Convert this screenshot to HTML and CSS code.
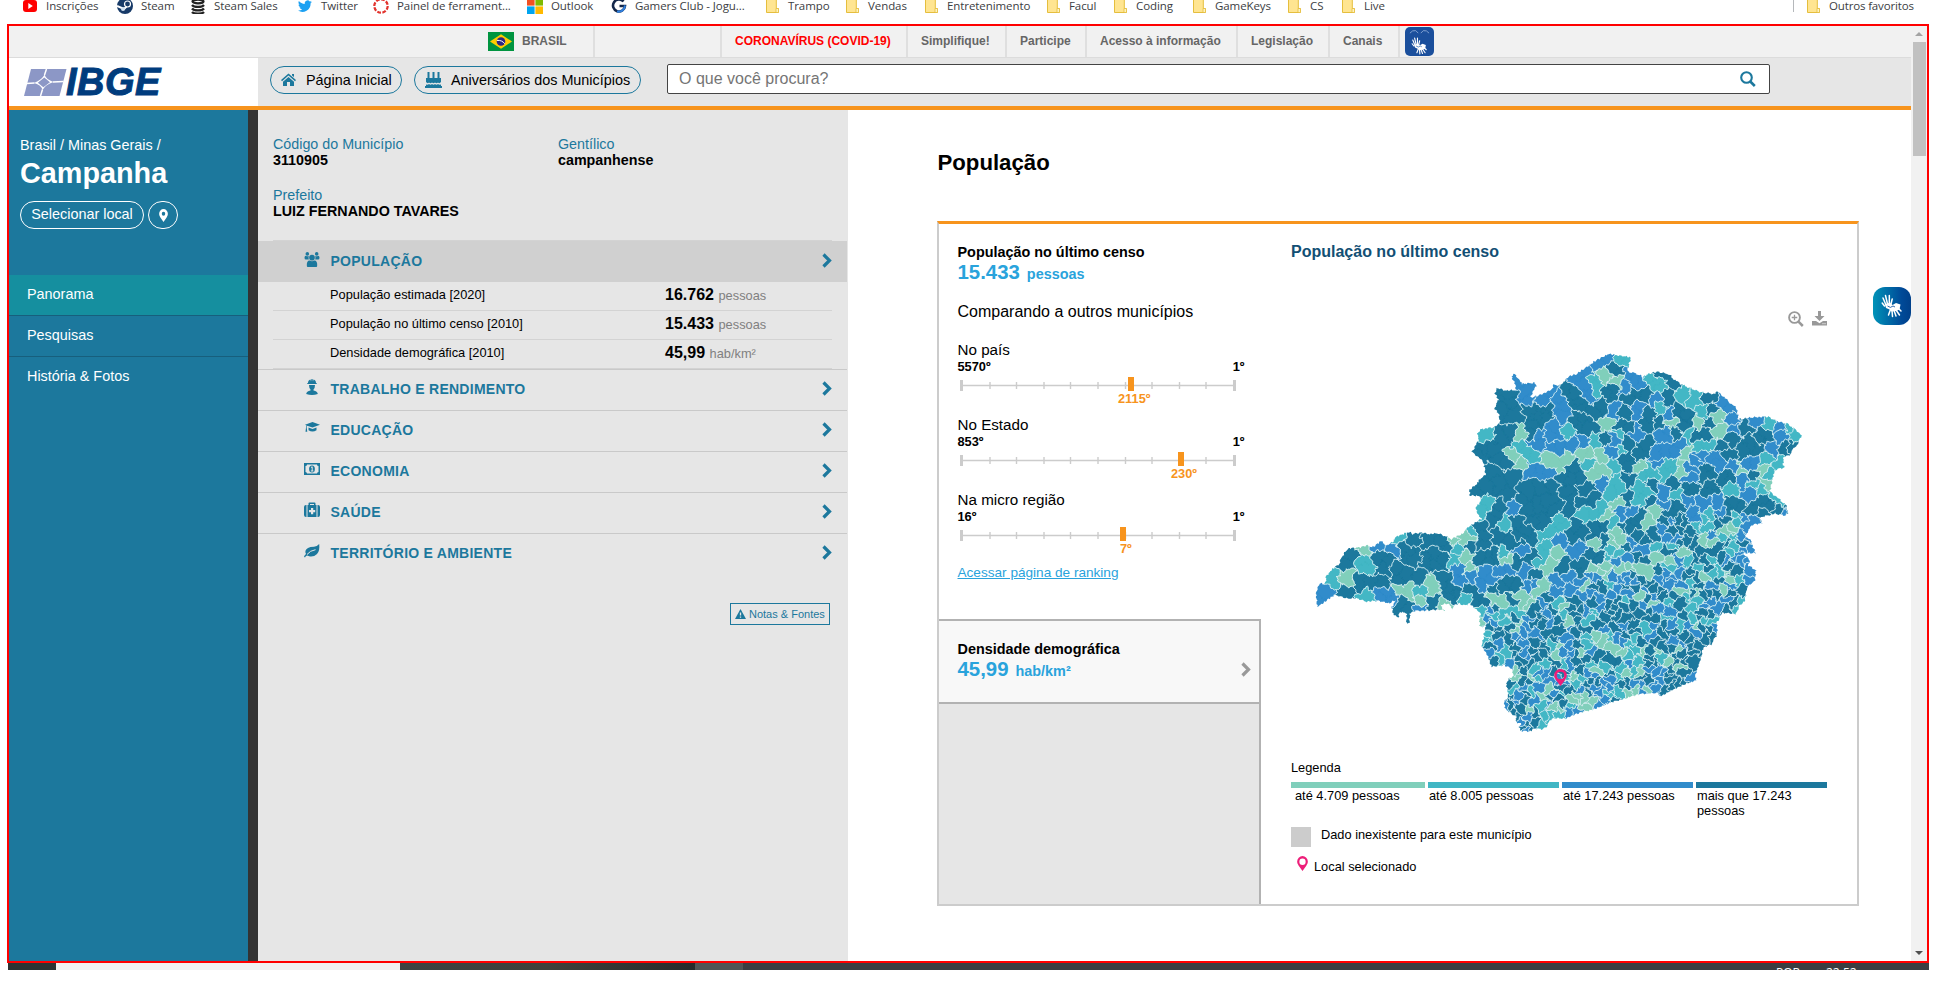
FILE: index.html
```html
<!DOCTYPE html>
<html lang="pt-BR">
<head>
<meta charset="utf-8">
<title>IBGE | Campanha</title>
<link rel="stylesheet" href="styles.css">
</head>
<body>
<svg class="defs" width="0" height="0">
  <defs>
    <symbol id="folder" viewBox="0 0 13 14"><path d="M.5 0h9.800v9.500h2v4H.5z" fill="#ffe591" stroke="#e5be3d"/><path d="M10 9.500h2.500v4H10z" fill="#fff3c0" stroke="#e5be3d" stroke-width=".8"/></symbol>
    <symbol id="chevron" viewBox="0 0 10 15"><path d="M1.500 1.500l6 6-6 6" fill="none" stroke="currentColor" stroke-width="3.200"/></symbol>
    <symbol id="pin" viewBox="0 0 13 17"><path fill-rule="evenodd" d="M6.500 0A6.300 6.300 0 0 0 .2 6.300C.2 8.300 1 9.300 2 11L6.500 17 11 11c1-1.700 1.800-2.700 1.800-4.700A6.300 6.300 0 0 0 6.500 0zm0 2.700a3.700 3.700 0 1 1 0 7.400 3.700 3.700 0 0 1 0-7.400z"/></symbol>
    <symbol id="hands" viewBox="0 0 22 24"><g fill="none" stroke="#fff" stroke-linecap="round" stroke-width="1.500"><path d="M5 11L2 4M6.500 10L4.500 1.500M8.300 9.500V1.500M10 10l1.200-5M3.500 12L1.200 9M17 14l3 3M15 16l3.500 5M13 16.500l2 5.500M11 16.500l.5 6M9.500 15.500L7.500 21"/></g><path d="M4 10.500l5-2 2.500 2.500L15 9l4.500 1.500-1 5-3 1.500-5 .5-2-2L5 14z" fill="#fff"/><path d="M6.500 12q3 2.800 5.500 0l2 1" fill="none" stroke="#1b5aa5" stroke-width=".9"/></symbol>
  </defs>
</svg>

<nav class="bookmarks">
  <a class="bm"><svg class="bm-icon" viewBox="0 0 16 16"><rect x="1" y="2" width="14" height="12" rx="3" fill="#f00"/><path d="M6.300 5v6l4.500-3z" fill="#fff"/></svg>Inscrições</a>
  <a class="bm"><svg class="bm-icon" viewBox="0 0 16 16"><circle cx="8" cy="8" r="8" fill="#173a68"/><path d="M0 8l7 3 5-5" stroke="#fff" stroke-width="2" fill="none"/><circle cx="10.500" cy="6" r="3" fill="#173a68" stroke="#fff" stroke-width="1.200"/><circle cx="6" cy="11" r="2" fill="#cfe0f0"/></svg>Steam</a>
  <a class="bm"><svg class="bm-icon" viewBox="0 0 16 16"><g fill="none" stroke="#222" stroke-width="2.200"><ellipse cx="8" cy="3.500" rx="5.500" ry="1.800"/><path d="M2 7c2 2.600 10 2.600 12 0M2 10.500c2 2.600 10 2.600 12 0M2 14c2 2.200 10 2.200 12 0"/></g></svg>Steam Sales</a>
  <a class="bm"><svg class="bm-icon" viewBox="0 0 16 16"><path fill="#1da1f2" d="M15 3.800c-.5.2-1.100.4-1.700.5.600-.4 1-1 1.300-1.600-.6.300-1.200.6-1.800.7a2.900 2.900 0 0 0-5 2.600C5.400 5.900 3.300 4.700 1.900 3c-.8 1.300-.4 3 .9 3.800-.5 0-.9-.1-1.300-.4 0 1.400 1 2.600 2.300 2.900-.4.100-.9.100-1.300 0 .4 1.200 1.500 2 2.700 2A5.800 5.800 0 0 1 1 12.500 8.200 8.200 0 0 0 13.600 5.200c.5-.4 1-.9 1.400-1.400z"/></svg>Twitter</a>
  <a class="bm"><svg class="bm-icon" viewBox="0 0 16 16"><circle cx="8" cy="8" r="6.700" fill="none" stroke="#e2332d" stroke-width="2.200" stroke-dasharray="3.800 1.450"/></svg>Painel de ferrament...</a>
  <a class="bm"><svg class="bm-icon" viewBox="0 0 16 16"><path fill="#f25022" d="M0 0h7.600v7.600H0z"/><path fill="#7fba00" d="M8.400 0H16v7.600H8.400z"/><path fill="#00a4ef" d="M0 8.400h7.600V16H0z"/><path fill="#ffb900" d="M8.400 8.400H16V16H8.400z"/></svg>Outlook</a>
  <a class="bm"><svg class="bm-icon" viewBox="0 0 16 16"><path d="M12.500 3.500A6 6 0 1 0 14 8H8.500" fill="none" stroke="#14284b" stroke-width="2.600"/><path d="M6 13.500q7 1 8-6" fill="none" stroke="#2f80e0" stroke-width="2"/></svg>Gamers Club - Jogu...</a>
  <a class="bm dir"><svg class="bm-folder"><use href="#folder"/></svg>Trampo</a>
  <a class="bm dir"><svg class="bm-folder"><use href="#folder"/></svg>Vendas</a>
  <a class="bm dir"><svg class="bm-folder"><use href="#folder"/></svg>Entretenimento</a>
  <a class="bm dir"><svg class="bm-folder"><use href="#folder"/></svg>Facul</a>
  <a class="bm dir"><svg class="bm-folder"><use href="#folder"/></svg>Coding</a>
  <a class="bm dir"><svg class="bm-folder"><use href="#folder"/></svg>GameKeys</a>
  <a class="bm dir"><svg class="bm-folder"><use href="#folder"/></svg>CS</a>
  <a class="bm dir"><svg class="bm-folder"><use href="#folder"/></svg>Live</a>
  <a class="bm dir other"><svg class="bm-folder"><use href="#folder"/></svg>Outros favoritos</a>
</nav>

<div class="frame">
  <div class="page">
    <div class="gov">
      <div class="gov-br"><svg width="26" height="19" viewBox="0 0 26 19"><path fill="#009440" d="M0 0h26v19H0z"/><path fill="#ffcb00" d="M13 2.200l11 7.300-11 7.300L2 9.500z"/><circle cx="13" cy="9.500" r="4.300" fill="#302681"/><path d="M9 8.400q5-.4 7.700 3.300" stroke="#fff" fill="none"/></svg>BRASIL</div>
      <div class="gov-gap"></div>
      <a class="gov-a covid">CORONAVÍRUS (COVID-19)</a>
      <a class="gov-a">Simplifique!</a>
      <a class="gov-a">Participe</a>
      <a class="gov-a">Acesso à informação</a>
      <a class="gov-a">Legislação</a>
      <a class="gov-a">Canais</a>
      <div class="gov-libras"><span class="libras-tile"><svg class="libras-brows" viewBox="0 0 25 6"><path d="M1 5q3-4 7-3l3 3M14 5l3-3q4-1 7 3" fill="none" stroke="#7f9fd0" stroke-width="1.200"/></svg><svg width="17" height="18"><use href="#hands"/></svg></span></div>
    </div>

    <header class="top">
      <div class="logo">
        <svg width="43" height="27" viewBox="0 0 43 27"><path fill="#8c97c6" d="M7 0h35.500l-7 27H0z"/><path d="M22.500 0L20.500 6M18.500 20.500l-2 6.500M2.500 14.500l8-.5M29 13l10.500-.5" stroke="#fff" stroke-width="1.500"/><path d="M20.500 5.500q1.500 5 9 7.500-8 2.500-11 8-1-5-8.500-7 8-3 10.500-8.500z" fill="#fff"/><path d="M20.300 8.500l5.700 4.700-6.700 5-5.500-4.500z" fill="#8c97c6"/></svg>
        <span class="logo-text">IBGE</span>
      </div>
      <a class="pill home"><svg width="15" height="14" viewBox="0 0 15 14"><path fill="#1c789d" d="M7.500.5L15 7l-1 1.200L7.500 2.600 1 8.200 0 7zM11 1h2v3l-2-1.600zM7.500 4L13 8.700V13H9V9H6v4H2V8.700z"/></svg>Página Inicial</a>
      <a class="pill bday"><svg width="17" height="16" viewBox="0 0 17 16"><path fill="#1c789d" d="M2.500 0h2v6h-2zM7.500 0h2v6h-2zM12.500 0h2v6h-2zM1 6h15v4q-1.500 2-3 .5-1.500 1.500-3 0-1.500 1.500-3 0-1.500 1.500-3 0-1.500 1.500-3-.5zM1 12.500q2 .5 3-.5 1.500 1.500 3 0 1.500 1.500 3 0 1.500 1.500 3 0 1 1 3 .5V14h1v2H0v-2h1z"/></svg>Aniversários dos Municípios</a>
      <div class="search"><span>O que você procura?</span><svg width="16" height="16" viewBox="0 0 16 16" fill="none" stroke="#1c789d"><circle cx="6.500" cy="6.500" r="5.300" stroke-width="2.100"/><path d="M10.300 10.500l4.500 4.500" stroke-width="2.600"/></svg></div>
    </header>

    <div class="content">
      <aside class="side">
        <div class="crumb">Brasil / Minas Gerais /</div>
        <h1 class="city">Campanha</h1>
        <div class="side-btns"><a class="outline">Selecionar local</a><a class="outline round"><svg width="9" height="13" viewBox="0 0 13 17" fill="#fff" preserveAspectRatio="none"><path fill-rule="evenodd" d="M6.500 0A6.300 6.300 0 0 0 .2 6.300C.2 8.300 1 9.300 2 11L6.500 17 11 11c1-1.700 1.800-2.700 1.800-4.700A6.300 6.300 0 0 0 6.500 0zm0 3.700a2.500 2.500 0 1 1 0 5 2.500 2.500 0 0 1 0-5z"/></svg></a></div>
        <ul class="menu"><li class="on">Panorama</li><li>Pesquisas</li><li>História &amp; Fotos</li></ul>
      </aside>

      <section class="panel">
        <div class="facts">
          <div><p>Código do Município</p><b>3110905</b></div>
          <div><p>Gentílico</p><b>campanhense</b></div>
          <div><p>Prefeito</p><b>LUIZ FERNANDO TAVARES</b></div>
        </div>
        <div class="cats">
          <div class="cat open"><svg class="ci" viewBox="0 0 16 16"><g fill="#1c789d"><circle cx="8" cy="6" r="3"/><circle cx="3" cy="2" r="1.900"/><circle cx="13" cy="2" r="1.900"/><path d="M2.500 15q-.5-6 3-6 2.500 1.500 5 0 3.500 0 3 6 0 1-1 1h-9q-1 0-1-1zM0 6q0-2 1.500-2Q3 5 4.600 4.200 4 6 4.600 8H1.500Q0 8 0 6zM16 6q0-2-1.500-2-1.500 1-3.100.2.600 1.800 0 3.800h3.100Q16 8 16 6z"/></g></svg><span>POPULAÇÃO</span><svg class="chev"><use href="#chevron"/></svg></div>
          <dl class="stats">
            <div><dt>População estimada [2020]</dt><dd><b>16.762</b> pessoas</dd></div>
            <div><dt>População no último censo [2010]</dt><dd><b>15.433</b> pessoas</dd></div>
            <div><dt>Densidade demográfica [2010]</dt><dd><b>45,99</b> hab/km²</dd></div>
          </dl>
          <div class="cat"><svg class="ci" viewBox="0 0 16 16"><path fill="#1c789d" d="M4 4q0-3 2.500-3.500l.5 2L7.500 0h1l.5 2.500.5-2Q12 1 12 4h.7v1H3.300V4zM5 6h6q0 3-1.500 4.500v1Q13.500 12 13.800 15q-5.800 2-11.600 0Q2.500 12 6.500 11.500v-1Q5 9 5 6z"/></svg><span>TRABALHO E RENDIMENTO</span><svg class="chev"><use href="#chevron"/></svg></div>
          <div class="cat"><svg class="ci" viewBox="0 0 16 16"><path fill="#1c789d" d="M1 4.800L8.500 2 16 4.800 8.500 7.600 3.200 5.800q-.6.800-.5 2l.6 4H1.500l.5-4q.1-1.500.6-2.400zM4.500 7.500l4 1.400 4-1.400v2.800q-4 2.400-8 0z"/></svg><span>EDUCAÇÃO</span><svg class="chev"><use href="#chevron"/></svg></div>
          <div class="cat"><svg class="ci" viewBox="0 0 16 16"><path fill="#1c789d" fill-rule="evenodd" d="M0 2h16v12H0zm3 1.500Q3 5 1.500 5v6Q3 11 3 12.500h10q0-1.500 1.500-1.500V5Q13 5 13 3.500z"/><ellipse cx="8" cy="8" rx="2.900" ry="3.500" fill="#1c789d"/><path d="M7 6.500l1.200-.7v4.200M6.800 10h2.600" stroke="#e6e6e6" fill="none"/></svg><span>ECONOMIA</span><svg class="chev"><use href="#chevron"/></svg></div>
          <div class="cat"><svg class="ci" viewBox="0 0 16 16"><path fill="#1c789d" fill-rule="evenodd" d="M4.500 3V1.500Q4.500.5 5.500.5h5q1 0 1 1V3h1v12h-9V3zM6 3h4V2H6zm1 3v2H5v2.200h2v2h2.200v-2h2V8h-2V6zM0 5q0-2 2-2h.5v12H2q-2 0-2-2zM16 5q0-2-2-2h-.5v12h.5q2 0 2-2z"/></svg><span>SAÚDE</span><svg class="chev"><use href="#chevron"/></svg></div>
          <div class="cat"><svg class="ci" viewBox="0 0 16 16"><path fill="#1c789d" d="M15.200 1Q16 8 13 11q-3 3-7 2.500-1.500-.3-3-1Q1.500 13 1 14.500l-1-.7Q.5 12 2 11 0 7.500 4 5q2-1.200 6-1.300Q13 3.500 15.200 1z"/><path d="M3 11.500Q6 7.500 11.500 6.700" fill="none" stroke="#e6e6e6"/></svg><span>TERRITÓRIO E AMBIENTE</span><svg class="chev"><use href="#chevron"/></svg></div>
        </div>
        <a class="notes"><svg width="11" height="10" viewBox="0 0 11 10"><path fill="#1c789d" d="M5.500 0L11 10H0z"/><path d="M5.500 3.400v3.200M5.500 7.600v1.200" stroke="#e6e6e6" stroke-width="1.300"/></svg>Notas &amp; Fontes</a>
      </section>

      <main class="main">
        <h2>População</h2>
        <div class="card">
          <div class="left">
            <div class="sel">
              <h3>População no último censo</h3>
              <p class="big"><b>15.433</b> pessoas</p>
              <p class="cmp">Comparando a outros municípios</p>
              <div class="rank"><p>No país</p><div class="ends"><b>5570º</b><b>1º</b></div><svg class="scale" viewBox="0 0 278 15"><path class="axis" d="M2 8.500h275"/><path class="tick" d="M32 5v7M58.500 5v7M86 5v7M112.500 5v7M140 5v7M167.500 5v7M194 5v7M221.500 5v7M248 5v7"/><path class="cap" d="M3.500 3v11M276.500 3v11"/><path class="mark" d="M170 0h6v14h-6z"/></svg><em class="r1">2115º</em></div>
              <div class="rank"><p>No Estado</p><div class="ends"><b>853º</b><b>1º</b></div><svg class="scale" viewBox="0 0 278 15"><path class="axis" d="M2 8.500h275"/><path class="tick" d="M32 5v7M58.500 5v7M86 5v7M112.500 5v7M140 5v7M167.500 5v7M194 5v7M221.500 5v7M248 5v7"/><path class="cap" d="M3.500 3v11M276.500 3v11"/><path class="mark" d="M220 0h6v14h-6z"/></svg><em class="r2">230º</em></div>
              <div class="rank"><p>Na micro região</p><div class="ends"><b>16º</b><b>1º</b></div><svg class="scale" viewBox="0 0 278 15"><path class="axis" d="M2 8.500h275"/><path class="tick" d="M32 5v7M58.500 5v7M86 5v7M112.500 5v7M140 5v7M167.500 5v7M194 5v7M221.500 5v7M248 5v7"/><path class="cap" d="M3.500 3v11M276.500 3v11"/><path class="mark" d="M162 0h6v14h-6z"/></svg><em class="r3">7º</em></div>
              <a class="rlink">Acessar página de ranking</a>
            </div>
            <div class="dens"><div><h3>Densidade demográfica</h3><p class="big"><b>45,99</b> hab/km²</p></div><svg class="chev grey"><use href="#chevron"/></svg></div>
            <div class="rest"></div>
          </div>
          <div class="right">
            <h4>População no último censo</h4>
            <div class="tools">
              <svg width="16" height="16" viewBox="0 0 16 16" fill="none" stroke="#999"><circle cx="6.500" cy="6.500" r="5.400" stroke-width="1.900"/><path d="M10.500 10.700l4.300 4.300" stroke-width="2.500"/><path d="M6.500 3.700v5.600M3.700 6.500h5.600" stroke-width="1.300"/></svg>
              <svg width="15" height="15" viewBox="0 0 15 15"><path fill="#999" d="M6 0h3v5h3.500l-5 5-5-5H6zM0 10h4l3.500 2.300L11 10h4v4.500H0z"/><path d="M10.500 12.700h1M12.500 12.700h1" stroke="#fff"/></svg>
            </div>
            <div class="map"><svg id="mg" width="560" height="410" viewBox="0 0 1680 1230"></svg><svg class="map-pin"><use href="#pin"/></svg></div>
            <p class="leg-t">Legenda</p>
            <div class="legend"><span class="c1">até 4.709 pessoas</span><span class="c2">até 8.005 pessoas</span><span class="c3">até 17.243 pessoas</span><span class="c4">mais que 17.243 pessoas</span></div>
            <p class="nodata"><i></i>Dado inexistente para este município</p>
            <p class="local"><svg width="11" height="15" viewBox="0 0 13 17" preserveAspectRatio="none" fill="#ed1e79"><use href="#pin"/></svg>Local selecionado</p>
          </div>
        </div>
        <div class="widget"><svg width="22" height="24"><use href="#hands"/></svg></div>
      </main>
    </div>
  </div>
  <div class="scroll"><i class="up"></i><i class="thumb"></i><i class="down"></i></div>
</div>
<div class="taskbar"><i class="t1"></i><i class="t2"></i><i class="t3"></i><i class="t4"></i><span class="t5">POR</span><span>22:52</span></div>
<script src="map.js"></script>
</body>
</html>
```
FILE: styles.css
```css
* { box-sizing: border-box; margin: 0; padding: 0; }
html, body { height: 100%; overflow: hidden; }
body { background: #fff; font-family: "Liberation Sans", Arial, sans-serif; font-size: 14.4px; color: #000; }
svg { display: block; flex: none; }
.defs { position: absolute; }
ul { list-style: none; }

.bookmarks { display: grid; grid-template-columns: 95px 73px 107px 76px 154px 84px 155px 80px 79px 122px 67px 79px 95px 54px 1fr 136px; height: 24px; padding-left: 22px; padding-right: 7px; font: 11.5px/12px "Open Sans", sans-serif; color: #3c4043; }
.bm { display: flex; align-items: center; gap: 8px; height: 12px; white-space: nowrap; letter-spacing: -.08px; }
.bm-icon { width: 16px; height: 16px; margin-top: -1px; }
.bm-folder { width: 13px; height: 14px; }
.bm.dir { gap: 9px; }
.bm.other { border-left: 1px solid #b5b8bb; padding-left: 13px; letter-spacing: -.15px; }

.frame { display: flex; width: 1922px; height: 939px; margin-left: 7px; border: 2px solid #f00; }
.page { width: 1902px; display: flex; flex-direction: column; position: relative; }

.gov { display: grid; grid-template-columns: 584px 127px 186px 99px 80px 151px 92px 70px 1fr; height: 32px; background: #f1f1f1; border-bottom: 1px solid #dcdcdc; font-size: 12px; font-weight: bold; line-height: 30px; color: #666; }
.gov > * + * { border-left: 2px solid #dfdfdf; }
.gov-br { display: flex; align-items: center; gap: 8px; padding: 0 0 1px 479px; }
.gov-a { padding-left: 13px; white-space: nowrap; }
.gov-a.covid { color: #f00; }
.gov-libras { padding: 1px 0 0 5px; }
.libras-tile { display: flex; flex-direction: column; align-items: center; gap: 3px; width: 29px; height: 29px; border-radius: 5px; background: #1b4f9c; padding-top: 2px; }
.libras-brows { width: 25px; height: 5px; }

.top { display: flex; height: 52px; background: #e6e6e6; border-bottom: 4px solid #f7941d; }
.logo { display: flex; width: 249px; background: #fff; padding: 11px 0 0 15px; }
.logo-text { margin-left: -1px; font: italic bold 38px/27px "Liberation Sans", Arial, sans-serif; letter-spacing: .5px; color: #003c7d; -webkit-text-stroke: 1px #003c7d; }
.pill { display: flex; align-items: center; height: 28px; margin-top: 8px; border: 1px solid #1c789d; border-radius: 14px; white-space: nowrap; }
.home { width: 132px; margin-left: 12px; padding-left: 10px; gap: 10px; }
.bday { width: 227px; margin-left: 12px; padding-left: 10px; gap: 9px; }
.search { display: flex; justify-content: space-between; width: 1103px; height: 30px; margin: 6px 0 0 26px; padding: 6px 13px 0 11px; border: 1px solid #444; border-radius: 2px; background: #fff; font-size: 16px; line-height: 16px; color: #757575; }

.content { display: flex; height: 851px; }
.side { width: 249px; background: #1c789d; border-right: 10px solid #333; color: #fff; padding-top: 27px; }
.crumb { padding-left: 11px; line-height: 16px; }
.city { padding-left: 11px; font-size: 28.800px; line-height: 34px; margin-top: 3px; }
.side-btns { display: flex; gap: 4px; padding: 11px 0 0 11px; }
.outline { height: 28px; width: 124px; border: 1px solid #fff; border-radius: 14px; line-height: 25px; text-align: center; font-size: 14.400px; }
.round { width: 30px; display: flex; align-items: center; justify-content: center; }
.menu { margin-top: 46px; }
.menu li { height: 41px; padding-left: 18px; line-height: 39px; border-bottom: 1px solid #175f7d; }
.menu li:last-child { border: 0; }
.menu .on { background: #158f9f; }

.panel { width: 590px; background: #e6e6e6; padding-right: 1px; }
.facts { display: grid; grid-template-columns: 285px 1fr; row-gap: 19px; padding: 27px 0 0 15px; height: 130px; grid-template-rows: 32px 32px; line-height: 16px; font-size: 14.300px; }
.facts p { color: #1c789d; line-height: 15px; }
.facts b { display: block; line-height: 16px; }
.cats { background: linear-gradient(#d3d3d3, #d3d3d3) 15px 0 / 559px 1px no-repeat; padding-top: 1px; }
.cat { display: flex; height: 41px; border-top: 1px solid #c9c9c9; padding-left: 46px; color: #1c789d; font-weight: bold; font-size: 14px; letter-spacing: .26px; line-height: 39px; }
.cat.open { background: #d0d0d0; border-color: #d0d0d0; }
.cat span { flex: 1; padding-left: 10.500px; }
.ci { width: 16px; height: 16px; margin-top: 9px; }
.open .ci { height: 15px; margin-top: 10px; }
.chev { width: 10px; height: 15px; margin: 11px 15px 0 0; color: #1c789d; }
.stats { padding: 0 15px; font-size: 12.800px; }
.stats div { display: flex; height: 29px; border-bottom: 1px solid #d3d3d3; padding-left: 57px; line-height: 26px; }
.stats dt { width: 335px; }
.stats dd { color: #808080; }
.stats b { color: #000; font-size: 16px; margin-right: 1px; }
.notes { display: flex; align-items: center; gap: 3px; width: 100px; height: 22px; margin: 29px 0 0 472px; padding-left: 4px; border: 1px solid #1c789d; color: #1c789d; font-size: 11px; white-space: nowrap; }

.main { flex: 1; padding: 40px 0 0 89.500px; position: relative; }
.main h2 { font-size: 22.200px; line-height: 26px; height: 71px; }
.card { display: flex; width: 922px; height: 685px; margin-left: -.5px; border: 2px solid #ccc; border-top: 3px solid #f7941d; }
.left { width: 322px; display: flex; flex-direction: column; }
.sel { height: 395px; padding: 20px 0 0 18.500px; }
h3 { font-size: 14.400px; line-height: 16px; }
.big { color: #29a3dc; font-weight: bold; line-height: 22px; margin-top: 1px; }
.big b { font-size: 20.400px; margin-right: 3px; }
.cmp { font-size: 16px; line-height: 18px; margin-top: 18px; }
.rank { position: relative; width: 287px; height: 75px; }
.cmp + .rank { margin-top: 20px; }
.rank p { font-size: 15.200px; line-height: 18px; }
.ends { display: flex; justify-content: space-between; font-size: 12.800px; line-height: 16px; }
.scale { width: 278px; height: 15px; margin-left: .5px; margin-top: 2px; }
.axis { stroke: #ccc; stroke-width: 1.600; }
.tick { stroke: #ccc; stroke-width: 1.400; }
.cap { stroke: #ccc; stroke-width: 3; }
.mark { fill: #f7941d; }
.rank em { display: block; width: 34px; font-style: normal; font-weight: bold; font-size: 12.800px; line-height: 14px; color: #f7941d; }
.r1 { margin-left: 160.500px; }
.r2 { margin-left: 213.500px; }
.r3 { margin-left: 162.500px; }
.rlink { display: block; font-size: 13.600px; line-height: 16px; margin-top: -1px; color: #29a3dc; text-decoration: underline; }
.dens { display: flex; justify-content: space-between; height: 85px; border: 2px solid #b2b2b2; border-left: 0; background: #f8f8f8; padding: 20px 0 0 18.500px; }
.dens .chev { color: #999; margin: 21px 8px 0 0; }
.rest { flex: 1; background: #e6e6e6; border-right: 2px solid #b2b2b2; }
.right { flex: 1; padding: 20px 0 0 30px; }
.right h4 { font-size: 16px; line-height: 16px; color: #124f74; }
.tools { display: flex; gap: 8px; justify-content: flex-end; margin: 51px 30px 0 0; height: 16px; }
.map { position: relative; height: 410px; margin: 13px -2px 0 -11px; width: 560px; }
.map-pin { position: absolute; left: 274px; top: 329px; width: 13px; height: 17px; fill: #ed1e79; }
.leg-t { font-size: 12.800px; line-height: 15px; margin-top: 10px; }
.legend { display: grid; grid-template-columns: 134px 131px 131px 131px; gap: 3px; margin-top: 7px; height: 45px; font-size: 12.800px; line-height: 15px; }
.legend span { border-top: 6px solid; padding-left: 1px; }
.legend .c1 { border-image: linear-gradient(#80cfbb, #80cfbb) 1; padding-left: 4px; }
.legend .c2 { border-image: linear-gradient(#41b6c4, #41b6c4) 1; }
.legend .c3 { border-image: linear-gradient(#318ccb, #318ccb) 1; }
.legend .c4 { border-image: linear-gradient(#1c789d, #1c789d) 1; }
.nodata { display: flex; gap: 10px; font-size: 12.800px; height: 29px; line-height: 16px; }
.nodata i { width: 20px; height: 20px; background: #ccc; }
.local { display: flex; gap: 6px; padding-left: 6px; font-size: 12.800px; line-height: 21px; }
.widget { position: absolute; right: 0; top: 177px; width: 38px; height: 38px; border-radius: 12px; background: linear-gradient(90deg, #0093b8, #004a98 75%, #00408a); display: flex; align-items: center; justify-content: center; }

.scroll { width: 16px; background: #f1f1f1; display: flex; flex-direction: column; align-items: center; }
.up { border: 4px solid transparent; border-top: 0; border-bottom: 4px solid #a3a3a3; margin-top: 6px; }
.thumb { width: 13px; height: 114px; background: #c1c1c1; margin-top: 6px; }
.down { border: 4px solid transparent; border-bottom: 0; border-top: 4px solid #505050; margin: auto 0 6px; }

.taskbar { display: flex; width: 1921px; height: 7px; margin-left: 8px; background: #3a3e42; overflow: hidden; font: 12px/15px "Open Sans", sans-serif; color: #fff; }
.taskbar span { width: 50px; padding-top: 2px; }
.taskbar .t5 { margin-left: 1033px; }
.t1 { width: 48px; background: #2d3333; }
.t2 { width: 344px; background: #f1f1f1; }
.t3 { width: 295px; background: linear-gradient(90deg, #3c4342, #3f413b 50%, #262b2b); }
.t4 { width: 48px; background: #505555; }
```
FILE: map.js
```js
// Choropleth of Minas Gerais: municipalities are Voronoi cells inside the state outline.
(function () {
  var FILL = { d: '#1c789d', b: '#318ccb', t: '#43b7c5', g: '#80cfbb' };
  var OUTLINE = '112,800 108,765 112,745 122,728 135,735 140,705 155,690 178,672 182,655 205,625 240,622 262,615 275,622 305,602 318,618 340,602 350,590 370,583 385,576 400,582 420,578 450,582 475,580 505,592 512,598 530,588 545,582 560,566 580,552 605,535 592,520 588,500 605,480 598,468 570,467 568,452 590,430 617,402 610,365 576,335 590,310 597,297 592,285 600,268 640,262 660,250 657,225 643,205 656,180 645,160 650,143 680,152 708,150 705,130 694,110 702,103 722,122 725,132 750,130 765,128 768,140 755,160 752,174 790,160 815,148 822,135 838,136 855,122 870,108 890,103 905,92 925,78 940,65 965,52 985,42 1015,46 1052,52 1045,80 1042,95 1065,100 1090,112 1105,103 1130,95 1165,103 1195,128 1220,140 1258,155 1300,163 1315,155 1340,180 1370,205 1375,238 1420,232 1465,230 1490,243 1525,252 1565,285 1550,318 1535,332 1530,345 1513,350 1508,370 1514,384 1492,386 1483,395 1475,430 1470,455 1495,475 1518,495 1523,517 1518,528 1485,520 1450,530 1440,535 1447,550 1420,553 1405,570 1395,592 1412,597 1415,612 1428,640 1400,638 1388,642 1410,660 1405,677 1428,690 1425,720 1400,745 1395,780 1380,795 1368,822 1325,818 1310,850 1312,880 1295,912 1270,922 1260,962 1250,992 1246,1010 1250,1022 1220,1030 1170,1052 1142,1068 1135,1058 1080,1062 1000,1085 950,1105 900,1118 860,1135 815,1135 800,1158 785,1168 765,1165 750,1175 720,1172 718,1160 722,1150 705,1145 712,1130 695,1122 675,1105 673,1085 685,1070 682,1045 678,1030 690,1015 700,1010 697,988 675,975 635,980 622,945 605,915 612,885 615,870 620,860 600,858 598,830 605,825 585,805 570,788 555,797 540,790 520,795 518,810 505,790 480,795 495,812 475,808 440,812 410,812 390,820 388,850 380,850 380,820 360,815 355,832 340,825 335,800 348,780 330,790 290,782 260,785 230,775 200,775 165,765 140,780';
  var WEST = 'b 135,765 125,785|t 155,715|g 198,717|d 200,665 215,640|g 252,625|t 255,660 262,685|d 200,755|d 240,725 270,725 305,725|t 262,768|b 318,765 340,775 300,770|b 292,622|d 300,650 320,660 310,685|b 345,628|t 355,597|d 385,640 405,655 365,625|d 400,595|d 350,690 380,705 415,715 360,720|d 450,600 480,610 505,620|d 440,660 470,670 490,660 460,640|g 365,750 385,757|t 420,755|g 460,740|d 490,720 515,740 530,760 510,770|d 365,790 385,800|g 420,785|b 420,803|d 458,790|g 492,795|t 553,775|g 520,607|t 538,625|g 550,590 565,598|t 575,575|d 570,620|t 522,658|g 560,652|d 600,560 615,590 610,610|b 540,690 540,720|g 567,685|b 570,710|b 610,700 600,735 640,715|d 625,655 600,650 650,645|t 665,640|g 675,660|d 640,745|d 690,725 670,735 710,740|d 590,770 610,790 575,745|g 640,780 665,787|g 715,765 730,790|t 690,815 665,820 720,825|t 640,830 680,845|b 680,685 660,695|b 730,690|b 740,740|d 765,705|g 790,730 775,755|d 805,770|b 825,725|b 868,715|d 905,680 905,700|t 790,640 780,665 800,610|g 825,640|g 820,665 800,690|d 840,680|b 840,600|b 905,622 885,628|g 945,610|d 960,650 930,640|d 690,600 655,585 720,612|b 725,630|d 740,660 765,645 710,668|d 740,570 720,590 710,550 755,590|t 670,550|b 700,500|d 650,520 640,545 660,500|t 620,495 605,515|d 620,440 660,435 700,405 640,390 590,455 680,460|d 640,330 690,280 610,330 600,345 650,360 680,370 665,290|t 618,280|d 685,185 665,215 700,225 690,160|b 735,160 715,130 745,180|b 790,180 815,165|d 770,225 750,205 795,220 755,280 800,210 760,260|g 725,280|t 735,335 760,345 715,320|g 705,340|g 725,370|b 770,310 780,290|g 800,360 830,370 860,355|b 780,395 755,385 805,400|b 840,320 870,315 815,320|b 825,265 810,285 835,290|b 840,200 850,230 830,175|t 862,275|d 900,250 885,240 930,265 915,230|d 880,160 860,145 905,200 940,210 965,200 895,180|b 910,130 920,160 930,180 885,115 925,100|b 960,70 985,60|t 940,110 950,150|g 972,105|b 915,310|t 945,300|g 905,345 930,340|g 958,345|t 925,378|g 940,400 970,390|b 965,430|d 780,440 740,450 820,440 720,480 770,500 810,480 830,500 790,550 750,510 760,540|d 880,380 870,420 900,410 850,420 870,470 865,510 860,450|d 915,450|d 935,480 910,485|t 840,540 810,570 785,590 850,550|d 890,560 880,590 910,580|d 950,570 940,590 965,560|g 600,845|b 620,845|t 625,880|d 645,870|d 680,885 690,905|t 615,900|d 630,920|b 628,938|d 640,960|d 765,800 750,815|b 800,815|b 770,880|d 830,870 850,865 805,880|b 850,895 870,890|g 720,850|d 760,850|d 795,920|b 735,940|d 770,960|d 690,1030|d 690,1090|d 830,970|b 740,1040|d 755,1162|t 788,1158|d 727,1165';
  var EAST = 't 235,55 255,58|d 235,95 225,80|b 280,120 270,105 300,125|d 200,155 215,150|d 290,165 270,175 320,165|t 340,130 360,140 330,120|d 370,105 400,120 350,100|d 385,170|t 430,170|t 460,180|d 510,175|b 550,185 570,205|t 490,215|d 440,225 430,250 450,240 415,215|t 360,200|b 300,210 290,215|d 255,220|d 325,220 320,260|g 395,250|b 380,275 370,290|d 500,245|g 538,230|g 540,275|b 570,235|b 580,265|d 620,260|d 680,285 660,300|b 650,240|t 690,245|b 725,290|t 765,290|b 700,330|b 720,255|d 570,300|d 630,310 610,330 650,320|d 570,345|d 490,285 470,290|t 440,290|t 480,320 500,318|b 420,315 380,330 350,345 400,340|d 310,310 300,340|b 290,280|d 260,310 260,350 265,380|t 235,280|d 260,260 240,260|d 195,300|b 225,300|b 215,215|g 435,340|b 480,345|b 525,350 535,370|b 580,380|t 390,370 370,400 400,385|t 330,390 310,405 345,400|g 300,385|g 422,387|d 510,390 500,400|b 450,385|b 450,415|d 550,415 570,410|g 603,385|b 640,370 620,380|t 680,355|g 670,390|d 640,407|t 640,432|g 682,430|t 690,400|t 720,375|b 607,425|d 450,450 440,440|d 400,430|d 330,435|d 510,450 515,440|t 575,450|b 630,460|d 585,490 570,510 600,500|d 660,480 630,510 685,500|d 715,510|b 370,465|t 410,465|d 395,510 385,520 410,500|b 530,490|b 495,490|b 465,540 460,520|d 535,545|t 510,530|b 640,550 620,560|t 595,550|g 565,575 550,570|t 300,450 290,480 320,455|g 345,510|d 265,480|b 240,520|g 230,490|t 210,460 230,430|t 130,520 160,520 185,505|t 220,547|g 240,600 230,580|g 320,540|d 290,550 300,530 270,565|b 370,565|b 270,600|t 205,630|d 180,650 195,610|b 260,650|d 315,660|b 225,670|d 320,600|g 350,650|d 520,635 540,625 490,635|t 570,640|d 390,635|b 385,595|d 440,600|d 590,690 575,700|b 625,690|t 595,715|d 610,750 620,740|d 580,790|d 560,810|b 570,740|g 310,695 335,705 290,685|b 285,725|d 340,745|b 380,705 390,730|g 425,755|d 250,830 270,830|d 330,835 350,832|d 215,955 200,960 230,965|d 320,1020|d 450,935|d 430,1000|d 400,1035 430,1030|b 210,1020|g 165,990|g 260,1005|d 145,1055|d 750,510';

  function pts(s) { return s.split(' ').map(function (p) { return p.split(',').map(Number); }); }
  var state = pts(OUTLINE), sites = [], groups = 0;
  function load(src, dx) {
    src.split('|').forEach(function (g) {
      var id = groups++;
      pts(g.slice(2)).forEach(function (p) { sites.push({ x: p[0] + dx, y: p[1], c: g[0], g: id }); });
    });
  }
  load(WEST, 0);
  load(EAST, 780);

  var seed = 20107;
  function rnd() { seed = (seed * 16807) % 2147483647; return seed / 2147483647; }
  function inside(x, y) {
    for (var i = 0, j = state.length - 1, r = false; i < state.length; j = i++) {
      var a = state[i], b = state[j];
      if ((a[1] > y) !== (b[1] > y) && x < (b[0] - a[0]) * (y - a[1]) / (b[1] - a[1]) + a[0]) r = !r;
    }
    return r;
  }
  // Municipalities get smaller toward the south and the east.
  function spacing(x, y) {
    if (x < 600) return 60;
    if (y > 1000) return 15;
    if (y > 900) return 18;
    if (y > 780) return 18;
    if (x > 900 && y > 680) return 18;
    if (x > 1150 && y > 520) return 19;
    if (x > 950 && y > 560) return 25;
    if (x > 950) return 31;
    return y > 700 ? 28 : 46;
  }
  for (var n = 0; n < 7000; n++) {
    var x = 560 + rnd() * 1010, y = 40 + rnd() * 1140, r = spacing(x, y) * (.75 + .7 * rnd());
    if (!inside(x, y)) continue;
    var ok = true;
    for (var k = 0; k < sites.length && ok; k++) {
      var ex = sites[k].x - x, ey = sites[k].y - y;
      if (ex * ex + ey * ey < r * r) ok = false;
    }
    if (!ok) continue;
    var q = rnd();
    sites.push({ x: x, y: y, c: q < .35 ? 'd' : q < .65 ? 'b' : q < .85 ? 't' : 'g', g: groups++ });
  }

  // Position-based offset gives shared borders the same irregular shape.
  function warp(x, y) {
    return [
      x + 5.5 * Math.sin(y * .13 + 2 * Math.sin(x * .07)) + 3 * Math.sin(y * .37 + x * .21) + 1.3 * Math.sin(y * .9 - x * .5),
      y + 5.5 * Math.sin(x * .12 + 2 * Math.sin(y * .08)) + 3 * Math.sin(x * .35 - y * .24) + 1.3 * Math.sin(x * .8 + y * .6)
    ];
  }
  function fine(x, y) {
    return [x + 1.8 * Math.sin(y * .4 + x * .2) + 1.2 * Math.sin(y * .95), y + 1.8 * Math.sin(x * .42 - y * .2) + 1.2 * Math.sin(x * .9)];
  }
  function line(a, b, f) {
    var m = Math.max(1, Math.ceil(Math.hypot(b[0] - a[0], b[1] - a[1]) / 3)), s = '';
    for (var i = 1; i <= m; i++) {
      var p = f(a[0] + (b[0] - a[0]) * i / m, a[1] + (b[1] - a[1]) * i / m);
      s += 'L' + p[0].toFixed(1) + ' ' + p[1].toFixed(1);
    }
    return s;
  }
  function start(a, f) { var p = f(a[0], a[1]); return 'M' + p[0].toFixed(1) + ' ' + p[1].toFixed(1); }

  var fills = { d: '', b: '', t: '', g: '' }, borders = '';
  sites.forEach(function (s, i) {
    var poly = [[60, 0, -1], [1640, 0, -1], [1640, 1220, -1], [60, 1220, -1]];
    sites.forEach(function (o, j) {
      if (i === j) return;
      var nx = o.x - s.x, ny = o.y - s.y, c = (o.x * o.x + o.y * o.y - s.x * s.x - s.y * s.y) / 2, out = [], cut = false;
      for (var k = 0; k < poly.length; k++) {
        var a = poly[k], b = poly[(k + 1) % poly.length];
        var da = a[0] * nx + a[1] * ny - c, db = b[0] * nx + b[1] * ny - c;
        if (da <= 0) out.push(a);
        if ((da <= 0) !== (db <= 0)) {
          var t = da / (da - db);
          cut = true;
          out.push([a[0] + t * (b[0] - a[0]), a[1] + t * (b[1] - a[1]), da <= 0 ? j : a[2]]);
        }
      }
      if (cut) poly = out;
    });
    var d = start(poly[0], warp);
    for (var k = 0; k < poly.length; k++) {
      var a = poly[k], b = poly[(k + 1) % poly.length];
      d += line(a, b, warp);
      if (a[2] > i && sites[a[2]].g !== s.g) borders += start(a, warp) + line(a, b, warp);
    }
    fills[s.c] += d + 'Z';
  });

  var clip = start(state[0], fine);
  for (var v = 0; v < state.length; v++) clip += line(state[v], state[(v + 1) % state.length], fine);
  var html = '<clipPath id="uf"><path d="' + clip + 'Z"/></clipPath><g clip-path="url(#uf)">';
  Object.keys(fills).forEach(function (c) {
    html += '<path d="' + fills[c] + '" fill="' + FILL[c] + '" stroke="' + FILL[c] + '" stroke-width="1.5"/>';
  });
  html += '<path d="' + borders + '" fill="none" stroke="#d3ecf1" stroke-width="2.9" stroke-linejoin="round"/></g>';
  document.getElementById('mg').innerHTML = html;
})();
```
